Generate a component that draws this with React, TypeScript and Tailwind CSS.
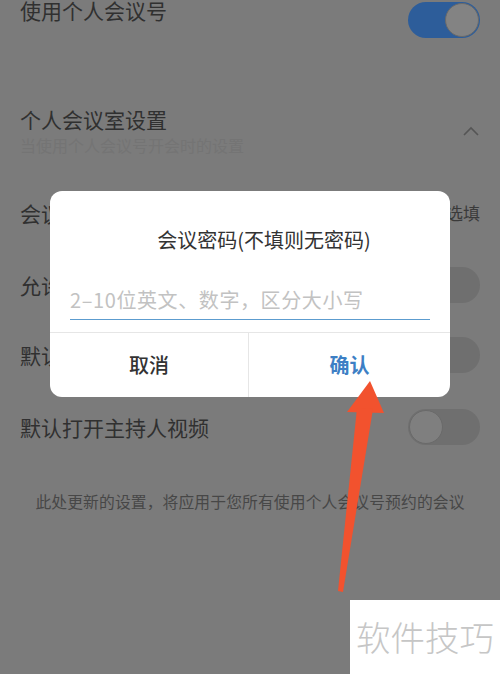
import React from 'react';

const font = { fontFamily: '"Noto Sans CJK SC", "Noto Sans", sans-serif' };

const Toggle: React.FC<{ on?: boolean }> = ({ on }) => (
  <div
    className={`relative w-[72px] h-[36px] rounded-full ${on ? 'bg-[#2d5d9a]' : 'bg-[#6f6f6f]'}`}
  >
    <div
      className={`absolute top-[1px] w-[34px] h-[34px] rounded-full border border-[#6a6a6a] ${
        on ? 'right-[1px] bg-[#838383]' : 'left-[1px] bg-[#7f7f7f]'
      }`}
    />
  </div>
);

const Row: React.FC<{ label: string; h: string; right?: React.ReactNode }> = ({ label, h, right }) => (
  <div className={`flex items-center justify-between ${h}`}>
    <span className="text-[21px] leading-[28px] text-[#303030]">{label}</span>
    {right}
  </div>
);

export default function App() {
  return (
    <div className="relative w-[500px] h-[674px] overflow-hidden bg-[#7b7b7b]" style={font}>
      {/* settings page behind the dim overlay */}
      <div className="px-[20px]">
        <div className="flex justify-between items-start h-[40px]">
          <span className="text-[21px] leading-[20px] text-[#303030]">使用个人会议号</span>
          <div className="mt-[2px]">
            <Toggle on />
          </div>
        </div>

        <div className="flex justify-between items-start h-[137px] pt-[65px]">
          <div className="flex flex-col">
            <span className="text-[21px] leading-[28px] text-[#303030]">个人会议室设置</span>
            <span className="mt-[2px] text-[16px] leading-[20px] text-[#747474]">当使用个人会议号开会时的设置</span>
          </div>
          <svg width="18" height="12" viewBox="0 0 18 12" className="mt-[20px]">
            <polyline points="2,10 9,3 16,10" fill="none" stroke="#555" strokeWidth="1.6" />
          </svg>
        </div>

        <Row label="会议密码" h="h-[72px]" right={<span className="text-[17px] text-[#3a3a3a]">选填</span>} />
        <Row label="允许成员在主持人前入会" h="h-[71px]" right={<Toggle />} />
        <Row label="默认静音" h="h-[70px]" right={<Toggle />} />
        <Row label="默认打开主持人视频" h="h-[74px]" right={<Toggle />} />

        <p className="mt-[28px] text-center text-[15.8px] leading-[20px] tracking-[0.1px] text-[#474747]">
          此处更新的设置，将应用于您所有使用个人会议号预约的会议
        </p>
      </div>

      {/* dialog */}
      <div className="absolute left-[50px] top-[191px] w-[400px] h-[206px] bg-white rounded-[12px] flex flex-col">
        <div className="pt-[35px] pl-[28px] text-center text-[20px] leading-[28px] text-[#333]">
          会议密码(不填则无密码)
        </div>
        <div className="mx-[20px] mt-[32px] pb-[5px] border-b border-[#5c9ccf]">
          <span className="text-[20px] leading-[28px] tracking-[0.6px] text-[#c2c2c2]">2–10位英文、数字，区分大小写</span>
        </div>
        <div className="mt-[12px] flex flex-1 border-t border-[#e6e6e6]">
          <div className="w-[199px] flex items-center justify-center border-r border-[#e6e6e6] text-[20px] font-medium text-[#333]">
            取消
          </div>
          <div className="flex-1 flex items-center justify-center text-[20px] font-bold text-[#3d7fc5]">
            确认
          </div>
        </div>
      </div>

      {/* annotation arrow */}
      <svg className="absolute left-0 top-0" width="500" height="674" viewBox="0 0 500 674">
        <polygon points="370,381 347,412 384,413" fill="#f2522e" />
        <polygon points="357,408 373,409 343,592 338,591" fill="#f2522e" />
      </svg>

      {/* watermark */}
      <div className="absolute left-[350px] top-[600px] w-[150px] h-[74px] bg-white flex items-center justify-center">
        <span className="text-[34.5px] font-light text-[#c6c6c6]">软件技巧</span>
      </div>
    </div>
  );
}
